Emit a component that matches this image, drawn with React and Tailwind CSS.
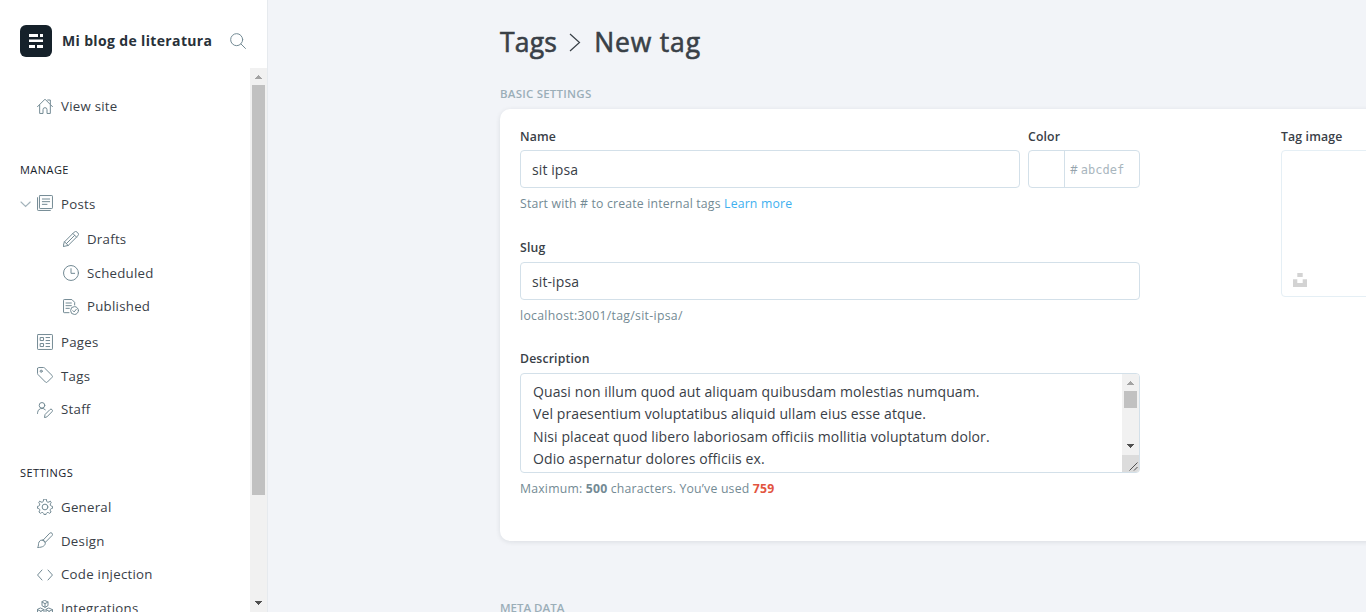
import React from "react";

function Icon({ children, className = "h-4 w-4" }) {
  return (
    <svg
      viewBox="0 0 24 24"
      fill="none"
      stroke="#738a94"
      strokeWidth="1.5"
      strokeLinecap="round"
      strokeLinejoin="round"
      className={"block shrink-0 " + className}
    >
      {children}
    </svg>
  );
}

const icons = {
  house: (
    <>
      <path d="M.8 13 12 1.800 23.200 13" />
      <path d="M4 10.500v12.700h5v-5.700a3 3 0 0 1 6 0v5.700h5V10.500" />
      <path d="M16 3h4v6" />
    </>
  ),
  posts: (
    <>
      <rect x="3.700" y=".8" width="19.500" height="19.500" rx="1" />
      <path d="M.8 4v18.200a1 1 0 0 0 1 1H20M8 6h11M8 10h11M8 14h7" />
    </>
  ),
  pencil: (
    <>
      <path d="M2.300 16.200 16.800 1.700a3.100 3.100 0 0 1 4.400 0l1.100 1.100a3.100 3.100 0 0 1 0 4.400L7.800 21.700.8 23.200Z" />
      <path d="m14.800 3.700 5.500 5.500M2.300 16.200l5.500 5.500M5 19 17.500 6.500" />
    </>
  ),
  clock: (
    <>
      <circle cx="12" cy="12" r="11.200" />
      <path d="M12 5.500V12.500h5.500" />
    </>
  ),
  published: (
    <>
      <path d="M9 20.500H1.800a1 1 0 0 1-1-1V1.800a1 1 0 0 1 1-1h11.500L17.500 5v4" />
      <path d="M4.500 6h8M4.500 10h8M4.500 14h5" />
      <circle cx="17.300" cy="17.300" r="5.900" />
      <path d="m14.800 17.500 1.900 1.900 3.300-4" />
    </>
  ),
  pages: (
    <>
      <rect x=".8" y=".8" width="22.400" height="22.400" rx="1" />
      <path d="M5.300 5.300h4.500v4.500H5.300zM5.300 14.300h4.500v4.500H5.300zM13.500 5.300h5.500M13.500 9.800h5.500M13.500 14.300h5.500M13.500 18.800h5.500" />
    </>
  ),
  tag: (
    <>
      <path d="M.8 2.300v7.500a2 2 0 0 0 .6 1.400l11.300 11.400a2 2 0 0 0 2.800 0l7.100-7.100a2 2 0 0 0 0-2.800L11.200 1.400A2 2 0 0 0 9.800.8H2.300A1.500 1.500 0 0 0 .8 2.300Z" />
      <circle cx="6.300" cy="6.300" r="1.600" />
    </>
  ),
  staff: (
    <>
      <circle cx="7.500" cy="5" r="4.200" />
      <path d="M.8 17.200v-1a6.800 6.800 0 0 1 11.700-4.600" />
      <path d="m11.300 22.900.8-4.200 7.300-7.300a2.100 2.100 0 0 1 3.100 0 2.200 2.200 0 0 1 0 3.200l-7.200 7.300Z" />
    </>
  ),
  gear: (
    <>
      <circle cx="12" cy="12" r="4.300" />
      <path d="m9.900.8-.4 2.300a2.400 2.400 0 0 1-3.500 1.400L4 3.200 2.600 5.700l1.300 1.500A2.400 2.400 0 0 1 2.700 10.500L.8 11v3l1.900.5a2.400 2.400 0 0 1 1.300 3.300l-1.200 1.700 2.300 2 1.800-1.100a2.400 2.400 0 0 1 3.100 1.200l.4 1.600h3.200l.4-1.600a2.400 2.400 0 0 1 3.100-1.200l1.800 1.100 2.300-2-1.200-1.700a2.400 2.400 0 0 1 1.300-3.300l1.900-.5v-3l-1.900-.5a2.400 2.400 0 0 1-1.200-3.300l1.300-1.500L20 3.200l-2 1.300a2.400 2.400 0 0 1-3.500-1.400L14.100.8Z" />
    </>
  ),
  brush: (
    <>
      <path d="M9.300 12 19.200 1.700a2.500 2.500 0 0 1 3.600 3.400L12.700 15.300Z" />
      <path d="M9 12.200a4.600 4.600 0 0 1 3.500 3.600c.2 4.400-3.500 7.400-11.700 7.400 2.200-2.200.7-5.300 2.200-8.200A5 5 0 0 1 9 12.200Z" />
    </>
  ),
  code: <path d="M7.500 4.500.8 12l6.700 7.500M16.500 4.500l6.700 7.500-6.700 7.500" />,
  cubes: (
    <>
      <path d="M12 .8 16.500 3v5.500L12 11 7.500 8.500V3ZM7.500 3 12 5.500 16.500 3M12 5.500V11" />
      <path d="M5.800 12.200 10.500 14.500v5.700L5.800 22.600.8 20.200v-5.700ZM.8 14.500l5 2.400 4.700-2.400M5.800 16.900v5.700" />
      <path d="m18.200 12.200 5 2.300v5.700l-5 2.400-4.700-2.400v-5.700ZM13.500 14.500l4.700 2.400 5-2.400M18.200 16.900v5.700" />
    </>
  ),
};

function NavItem({ icon, label, className = "h-[34px]", textClass = "mt-0", sub = false, open = false, raise = false }) {
  return (
    <div className={"flex shrink-0 items-center " + (sub ? "pl-[63px] " : "pl-5 ") + className}>
      {!sub && (
        <span className="flex w-[17px] shrink-0">
          {open && (
            <svg viewBox="0 0 11 8" className="h-2 w-[11px]" fill="none" stroke="#a3b3bb" strokeWidth="1.1" strokeLinecap="round">
              <path d="m1 2 4.600 4.500L10.200 2" />
            </svg>
          )}
        </span>
      )}
      <Icon className={raise ? "h-4 w-4 mb-[2px]" : "h-4 w-4"}>{icons[icon]}</Icon>
      <span className={"ml-2 whitespace-nowrap text-[13.250px] leading-5 tracking-[0.260px] text-[#394047] " + textClass}>
        {label}
      </span>
    </div>
  );
}

function NavHeading({ children }) {
  return (
    <h2 className="mt-[37px] mb-[7px] h-5 shrink-0 pl-5 text-[11px] leading-5 tracking-[0.450px] text-[#15212a]">
      {children}
    </h2>
  );
}

function Arrow({ down = false }) {
  return (
    <svg viewBox="0 0 7 4" className="block h-1 w-[7px]" shapeRendering="crispEdges">
      {down ? <path d="M0 0h7L3.500 4Z" fill="#505050" /> : <path d="M0 4h7L3.500 0Z" fill="#a3a3a3" />}
    </svg>
  );
}

function Sidebar() {
  return (
    <aside className="flex h-full w-[268px] shrink-0 flex-col border-r border-[#e6eaee] bg-white">
      <header className="flex h-[68px] shrink-0 items-center pb-px pl-5">
        <svg viewBox="0 0 32 32" className="mt-[15px] mb-[1px] h-8 w-8 shrink-0">
          <rect width="32" height="32" rx="6" fill="#15212a" />
          <path d="M9 9h9v3H9zM20 9h3v3h-3zM9 14.500h14v2.500H9zM9 20h6v3H9zM17 20h6v3h-6z" fill="#fff" />
        </svg>
        <span className="mt-[14px] ml-[10px] w-[168px] whitespace-nowrap text-[14px] font-bold tracking-[0.350px] text-[#283139]">
          Mi blog de literatura
        </span>
        <Icon className="mt-[14px] h-4 w-4">
          <circle cx="10" cy="10" r="9" />
          <path d="m16.500 16.500 6.700 6.700" />
        </Icon>
      </header>
      <div className="flex min-h-0 flex-1">
        <nav className="flex min-w-0 flex-1 flex-col overflow-hidden pt-[21px]">
          <NavItem icon="house" label="View site" />
          <NavHeading>MANAGE</NavHeading>
          <NavItem icon="posts" label="Posts" open raise />
          <NavItem icon="pencil" label="Drafts" sub className="mt-px h-[34px]" />
          <NavItem icon="clock" label="Scheduled" sub />
          <NavItem icon="published" label="Published" sub className="h-[33px]" textClass="-mt-[2px]" />
          <NavItem icon="pages" label="Pages" className="mt-[2px] h-[34px]" />
          <NavItem icon="tag" label="Tags" raise />
          <NavItem icon="staff" label="Staff" className="h-[33px]" textClass="-mt-[2px]" />
          <NavHeading>SETTINGS</NavHeading>
          <NavItem icon="gear" label="General" />
          <NavItem icon="brush" label="Design" raise />
          <NavItem icon="code" label="Code injection" className="h-[33px]" textClass="-mt-[2px]" />
          <NavItem icon="cubes" label="Integrations" />
        </nav>
        <div className="flex w-[17px] shrink-0 flex-col items-center bg-[#f1f1f1]">
          <div className="flex h-[17px] items-center"><Arrow /></div>
          <div className="h-[410px] w-[13px] bg-[#c1c1c1]" />
          <div className="mt-auto flex h-[17px] items-center pb-[2px]"><Arrow down /></div>
        </div>
      </div>
    </aside>
  );
}

function Label({ children, className = "leading-[16px]" }) {
  return (
    <label className={"block h-[22px] whitespace-nowrap text-[12.250px] font-semibold tracking-[0.150px] text-[#394047] " + className}>
      {children}
    </label>
  );
}

const field = "rounded-[4px] border border-[#d3e0e9] bg-white";
const fieldText = "text-[14px] tracking-[0.100px] text-[#394047]";
const help = "whitespace-nowrap text-[12.250px] leading-[18px] text-[#738a94]";

const description = [
  "Quasi non illum quod aut aliquam quibusdam molestias numquam.",
  "Vel praesentium voluptatibus aliquid ullam eius esse atque.",
  "Nisi placeat quod libero laboriosam officiis mollitia voluptatum dolor.",
  "Odio aspernatur dolores officiis ex.",
];

function TagForm() {
  return (
    <section className="flex h-[432px] w-[1000px] rounded-[10px] bg-white px-5 pt-[19px] shadow-[0_1px_5px_rgba(21,33,42,0.1)]">
      <div className="w-[620px] shrink-0">
        <div className="flex gap-2">
          <div className="w-[500px]">
            <Label className="leading-[18px]">Name</Label>
            <input defaultValue="sit ipsa" className={"block h-[38px] w-full px-[11px] outline-none " + field + " " + fieldText} />
          </div>
          <div className="w-[112px]">
            <Label className="leading-[18px]">Color</Label>
            <div className={"flex h-[38px] items-center " + field}>
              <span className="h-full w-9 border-r border-[#d3e0e9]" />
              <span className="mt-[2px] ml-[5px] text-[12px] text-[#95a4ad]">#</span>
              <span className="mt-[2px] ml-[3px] font-['DejaVu_Sans_Mono',monospace] text-[12px] text-[#a9b6be]">abcdef</span>
            </div>
          </div>
        </div>
        <p className={"mt-[7px] tracking-[0.180px] " + help}>
          Start with # to create internal tags <a className="text-[#3eb0ef]">Learn more</a>
        </p>
        <div className="mt-[27px]">
          <Label>Slug</Label>
          <input defaultValue="sit-ipsa" className={"block h-[38px] w-full px-[11px] outline-none " + field + " " + fieldText} />
          <p className={"mt-[7px] tracking-[0.300px] " + help}>localhost:3001/tag/sit-ipsa/</p>
        </div>
        <div className="mt-[26px]">
          <Label>Description</Label>
          <div className={"flex h-[100px] overflow-hidden " + field}>
            <div className={"min-w-0 flex-1 pt-[7px] pl-3 leading-[22.400px] " + fieldText}>
              {description.map((line) => (
                <p key={line} className="whitespace-nowrap">{line}</p>
              ))}
            </div>
            <div className="flex w-[17px] shrink-0 flex-col items-center bg-[#f1f1f1]">
              <div className="flex h-[17px] items-center"><Arrow /></div>
              <div className="h-[17px] w-[13px] bg-[#c1c1c1]" />
              <div className="mt-auto flex h-[17px] items-center pb-[2px]"><Arrow down /></div>
              <div className="flex h-[17px] w-full items-end justify-end bg-[#dcdcdc] p-px">
                <svg viewBox="0 0 9 9" className="h-[9px] w-[9px]" stroke="#505050" fill="none">
                  <path d="M.5 8.500l8-8M5 8.500l3.500-3.500" />
                </svg>
              </div>
            </div>
          </div>
          <p className={"mt-[7px] tracking-[0.200px] " + help}>
            Maximum: <b>500</b> characters. You’ve used <b className="text-[#e25440]">759</b>
          </p>
        </div>
      </div>
      <div className="ml-[141px] flex-1">
        <Label className="leading-[18px]">Tag image</Label>
        <div className="flex h-[147px] items-end rounded-[4px] border border-[#e5eff5] pb-[9px] pl-[11px]">
          <svg viewBox="0 0 14 14" className="h-[14px] w-[14px]" fill="#d3d3d3">
            <path d="M4.300 0h5.400v4H4.300zM0 6.200h4.300V10h5.400V6.200H14V14H0z" />
          </svg>
        </div>
      </div>
    </section>
  );
}

export default function App() {
  return (
    <div className="flex h-[612px] w-full overflow-hidden bg-[#f2f4f8] font-['Open_Sans','Noto_Sans',sans-serif]">
      <Sidebar />
      <main className="min-w-0 flex-1 overflow-hidden pl-[232px]">
        <h1 className="flex h-[84px] items-center pt-[1px] text-[26.500px] whitespace-nowrap text-[#394047] [-webkit-text-stroke:0.6px_#394047]">
          <span className="tracking-[0.200px]">Tags</span>
          <svg viewBox="0 0 12 19" className="mr-[13px] ml-3 h-[19px] w-3" fill="none" stroke="#394047" strokeWidth="1.2">
            <path d="m1 1 9.500 8.500L1 18" />
          </svg>
          <span className="tracking-[0.850px]">New tag</span>
        </h1>
        <h4 className="h-[25px] text-[11.500px] leading-[20px] font-semibold tracking-[0.230px] text-[#9baeb8]">BASIC SETTINGS</h4>
        <TagForm />
        <h4 className="mt-[57px] h-[25px] text-[11.500px] leading-[20px] font-semibold text-[#9baeb8]">META DATA</h4>
      </main>
    </div>
  );
}
